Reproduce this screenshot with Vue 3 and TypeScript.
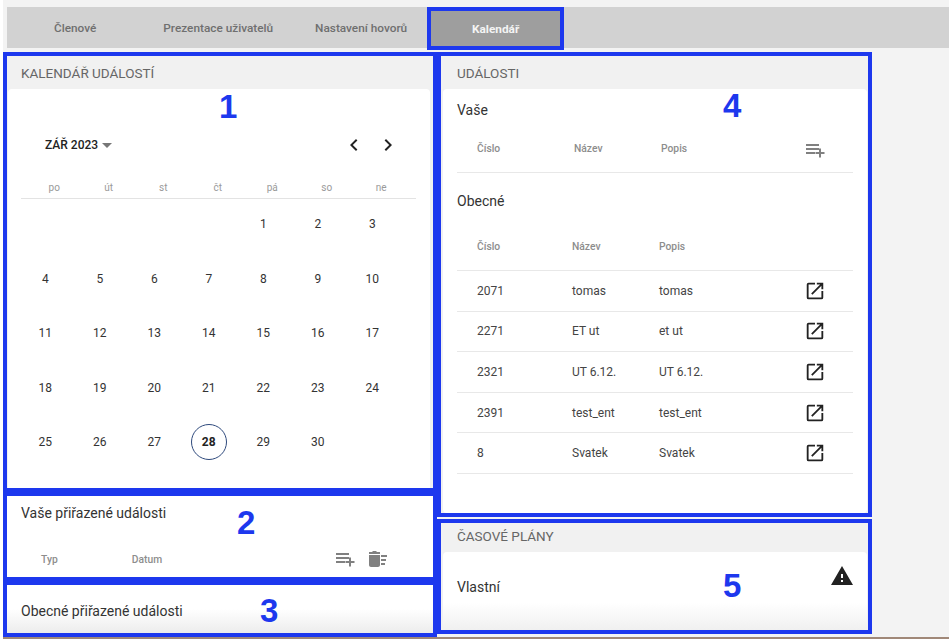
<script setup lang="ts">
const tabs = [
  { label: 'Členové', cls: 'tab-members' },
  { label: 'Prezentace uživatelů', cls: 'tab-presentation' },
  { label: 'Nastavení hovorů', cls: 'tab-calls' },
]
const weekdays = ['po', 'út', 'st', 'čt', 'pá', 'so', 'ne']

// září 2023 začíná v pátek
const days: (number | null)[] = [
  null, null, null, null,
  ...Array.from({ length: 30 }, (_, i) => i + 1),
]
const today = 28

const events = [
  { id: '2071', name: 'tomas', desc: 'tomas' },
  { id: '2271', name: 'ET ut', desc: 'et ut' },
  { id: '2321', name: 'UT 6.12.', desc: 'UT 6.12.' },
  { id: '2391', name: 'test_ent', desc: 'test_ent' },
  { id: '8', name: 'Svatek', desc: 'Svatek' },
]
</script>

<template>
  <div class="page">
    <nav class="tabs">
      <span v-for="t in tabs" :key="t.label" class="tab" :class="t.cls">{{ t.label }}</span>
      <span class="tab-active"><span class="tab-active-inner">Kalendář</span></span>
    </nav>

    <div class="columns">
      <div class="col">
        <section class="box box-calendar">
          <h2 class="box-head">KALENDÁŘ UDÁLOSTÍ</h2>
          <div class="card calendar">
            <div class="month-row">
              <span class="month">ZÁŘ 2023</span>
              <span class="caret"></span>
              <span class="month-nav">
                <svg width="24" height="24" viewBox="0 0 24 24"><path d="M15.4 7.4 14 6l-6 6 6 6 1.400-1.400-4.600-4.600z" fill="#222" /></svg>
                <svg width="24" height="24" viewBox="0 0 24 24"><path d="M8.600 16.600 10 18l6-6-6-6-1.400 1.400 4.600 4.600z" fill="#222" /></svg>
              </span>
            </div>
            <div class="weekdays">
              <span v-for="d in weekdays" :key="d">{{ d }}</span>
            </div>
            <div class="days">
              <span v-for="(d, i) in days" :key="i" class="day">
                <b v-if="d === today" class="today">{{ d }}</b>
                <template v-else>{{ d }}</template>
              </span>
            </div>
          </div>
          <span class="marker marker-1">1</span>
        </section>

        <section class="box box-assigned">
          <h3 class="sub-title">Vaše přiřazené události</h3>
          <div class="assigned-row">
            <span class="th th-type">Typ</span>
            <span class="th th-date">Datum</span>
            <svg class="ico-add" width="24" height="24" viewBox="0 0 24 24"><path d="M4 6h13v2H4zm0 4h13v2H4zm0 4h9v2H4zm13 0v-3.500h2V14h3.500v2H19v3.500h-2V16h-3.500v-2z" fill="#808080" /></svg>
            <svg class="ico-clear" width="24" height="24" viewBox="0 0 24 24"><path d="M15 16h4v2h-4zm0-8h6v2h-6zm0 4h5v2h-5zM3 18c0 1.100.9 2 2 2h7c1.100 0 2-.9 2-2V8H3zM14 5h-3l-1-1H7L6 5H3v2h11z" fill="#808080" /></svg>
          </div>
          <span class="marker marker-2">2</span>
        </section>

        <section class="box box-general">
          <h3 class="sub-title">Obecné přiřazené události</h3>
          <span class="marker marker-3">3</span>
        </section>
      </div>

      <div class="col col-right">
        <section class="box box-events">
          <h2 class="box-head">UDÁLOSTI</h2>
          <div class="card events">
            <h3 class="group-title">Vaše</h3>
            <div class="row row-head own">
              <span class="c-id">Číslo</span>
              <span class="c-name">Název</span>
              <span class="c-desc">Popis</span>
              <svg class="c-act" width="24" height="24" viewBox="0 0 24 24"><path d="M4 6h13v2H4zm0 4h13v2H4zm0 4h9v2H4zm13 0v-3.500h2V14h3.500v2H19v3.500h-2V16h-3.500v-2z" fill="#808080" /></svg>
            </div>
            <h3 class="group-title second">Obecné</h3>
            <div class="row row-head">
              <span class="c-id">Číslo</span>
              <span class="c-name">Název</span>
              <span class="c-desc">Popis</span>
            </div>
            <div v-for="e in events" :key="e.id" class="row row-item">
              <span class="c-id">{{ e.id }}</span>
              <span class="c-name">{{ e.name }}</span>
              <span class="c-desc">{{ e.desc }}</span>
              <svg class="c-act" width="22" height="22" viewBox="0 0 24 24"><path d="M19 19H5V5h7V3H5a2 2 0 0 0-2 2v14a2 2 0 0 0 2 2h14a2 2 0 0 0 2-2v-7h-2zM14 3v2h3.600l-9.800 9.800 1.400 1.400L19 6.400V10h2V3z" fill="#222" /></svg>
            </div>
          </div>
          <span class="marker marker-4">4</span>
        </section>

        <section class="box box-plans">
          <h2 class="box-head head-plans">ČASOVÉ PLÁNY</h2>
          <div class="card plans">
            <span class="plan-name">Vlastní</span>
            <svg class="warn" width="24" height="24" viewBox="0 0 24 24"><path d="M1 21h22L12 2zm12-3h-2v-2h2zm0-4h-2v-4h2z" fill="#222" /></svg>
          </div>
          <span class="marker marker-5">5</span>
        </section>
      </div>
    </div>
    <div class="page-end"></div>
  </div>
</template>

<style>
html,
body {
  margin: 0;
  overflow: hidden;
}
</style>

<style scoped>
.page {
  position: relative;
  width: 949px;
  height: 642px;
  overflow: hidden;
  background: #f3f3f3;
  box-sizing: border-box;
  border-left: 3px solid #fff;
  padding-top: 7px;
  font-family: Roboto, "Liberation Sans", sans-serif;
  color: #333;
}

.tabs {
  display: flex;
  align-items: center;
  height: 41px;
  margin-left: 4px;
  padding-left: 47px;
  background: #d2d2d2;
  font-size: 11.800px;
  font-weight: 500;
  color: #6f6f6f;
}
.tab-members { margin-right: 67px; }
.tab-presentation { margin-right: 42px; }
.tab-calls { margin-right: 20px; }

.tab-active {
  box-sizing: border-box;
  align-self: flex-start;
  width: 137px;
  height: 43px;
  border: 4px solid #1d38ee;
}
.tab-active-inner {
  display: flex;
  align-items: center;
  justify-content: center;
  height: 100%;
  background: #9e9e9e;
  color: #f4f4f4;
  font-weight: 700;
}

.columns {
  display: flex;
  margin-top: 4px;
}
.col {
  display: flex;
  flex-direction: column;
  width: 434px;
}
.col-right {
  width: 435px;
  gap: 2px;
}

.box {
  position: relative;
  box-sizing: border-box;
  border: 4px solid #1d38ee;
  background: #f1f1f1;
}
.box-calendar { height: 440px; }
.box-assigned { height: 89px; background: #fff; }
.box-general {
  height: 56px;
  background: linear-gradient(#fff 50%, #ececec);
}
.box-events { height: 465px; }
.box-plans { height: 115px; }

.box-head {
  margin: 0;
  height: 33px;
  padding-left: 14px;
  font-size: 13.500px;
  font-weight: 400;
  line-height: 35px;
  color: #666;
}
.col-right .box-head { padding-left: 16px; }
.head-plans { height: 29px; line-height: 27px; }

.card {
  box-sizing: border-box;
  margin: 0 3px 0 1px;
  background: #fff;
  border-radius: 4px 4px 0 0;
}
.col-right .card {
  margin: 0 1px 0 2px;
  border-radius: 4px;
}

.calendar {
  height: 399px;
  padding: 44px 0 0 13px;
}
.month-row {
  display: flex;
  align-items: center;
  height: 24px;
  padding-left: 24px;
}
.month {
  font-size: 12px;
  font-weight: 500;
  color: #222;
}
.caret {
  margin-left: 4px;
  border-left: 5px solid transparent;
  border-right: 5px solid transparent;
  border-top: 5px solid #777;
}
.month-nav {
  display: flex;
  gap: 10px;
  margin-left: 230px;
}
.weekdays,
.days {
  display: grid;
  grid-template-columns: repeat(7, 54.500px);
  justify-items: center;
}
.weekdays {
  box-sizing: border-box;
  width: 395px;
  height: 24px;
  margin-top: 18px;
  padding: 7px 0 0 6px;
  border-bottom: 1px solid #e3e3e3;
  font-size: 10px;
  line-height: 12px;
  color: #9a9a9a;
}
.days {
  grid-auto-rows: 54.500px;
  margin: -2px 0 0 -3px;
  font-size: 12px;
  color: #333;
}
.day {
  display: flex;
  align-items: center;
  justify-content: center;
  width: 100%;
}
.today {
  display: flex;
  align-items: center;
  justify-content: center;
  box-sizing: border-box;
  width: 36px;
  height: 36px;
  border: 1px solid #2f4a7d;
  border-radius: 50%;
  color: #222;
}

.sub-title {
  margin: 0;
  padding: 8px 0 0 14px;
  font-size: 14px;
  font-weight: 400;
  line-height: 18px;
  color: #333;
}
.box-general .sub-title { padding-top: 17px; }

.assigned-row {
  display: flex;
  align-items: center;
  height: 24px;
  margin-top: 25px;
  font-size: 10.300px;
  font-weight: 500;
  color: #8d8d8d;
}
.th-type { margin-left: 34px; }
.th-date { margin-left: 74px; }
.ico-add { margin-left: 170px; }
.ico-clear { margin-left: 10px; }

.events { height: 424px; padding: 0 14px; }
.group-title {
  margin: 0;
  padding-top: 12px;
  font-size: 14px;
  font-weight: 400;
  line-height: 18px;
  color: #333;
}
.group-title.second { padding-top: 19px; }

.row {
  position: relative;
  display: flex;
  align-items: center;
  box-sizing: border-box;
  border-bottom: 1px solid #e8e8e8;
  font-size: 12px;
}
.row-head {
  height: 61px;
  padding-top: 13px;
  font-size: 10.300px;
  font-weight: 500;
  color: #8d8d8d;
}
.row-head.own { height: 54px; padding-top: 6px; }
.row-item { height: 40.600px; color: #444; }
.c-id { width: 95px; margin-left: 20px; }
.c-name { width: 87px; }
.c-desc { width: 132px; }
.own .c-id { width: 97px; }
.c-act { margin-left: 13px; }
.own .c-act { margin-left: 9px; margin-top: 2px; }

.plans {
  position: relative;
  height: 78px;
  padding: 27px 14px 0;
  background: linear-gradient(#fff 65%, #f0f0f0);
  font-size: 14px;
  color: #333;
}
.warn {
  position: absolute;
  top: 12px;
  right: 13px;
}

.marker {
  position: absolute;
  font-family: "Liberation Sans", sans-serif;
  font-size: 33px;
  font-weight: 700;
  line-height: 1;
  color: #1d38ee;
}
.marker-1 { left: 212px; top: 34px; }
.marker-2 { left: 230px; top: 10px; }
.marker-3 { left: 253px; top: 9px; }
.marker-4 { left: 282px; top: 33px; }
.marker-5 { left: 282px; top: 46px; }

.page-end {
  position: absolute;
  left: 0;
  right: 0;
  bottom: 0;
  height: 3px;
  border-top: 2px solid #a08878;
  background: #fff;
}
</style>
